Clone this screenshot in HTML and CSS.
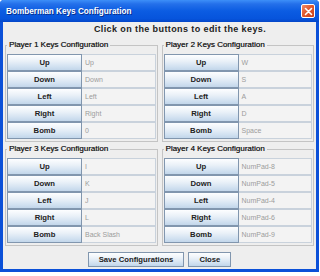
FILE: index.html
```html
<!DOCTYPE html>
<html>
<head>
	<title>Bomberman Keys Configuration</title>
	<meta charset=utf-8>
	<link rel="stylesheet" href="styles.css">
</head>
<body>
	<div class="window">
		<div class="titlebar">
			<span class="title">Bomberman Keys Configuration</span>
			<span class="close-x">
				<svg width="9" height="9" viewBox="0 0 9 9"><path d="M1.5 1.5 L7.5 7.5 M7.5 1.5 L1.5 7.5" stroke="#fff" stroke-width="1.6" stroke-linecap="round"/></svg>
			</span>
		</div>
		<div class="content">
			<p class="hint">Click on the buttons to edit the keys.</p>
			<div class="players">
				<fieldset class="player">
					<legend>Player 1 Keys Configuration</legend>
					<div class="key-row"><button class="key-btn">Up</button><span class="key-field">Up</span></div>
					<div class="key-row"><button class="key-btn">Down</button><span class="key-field">Down</span></div>
					<div class="key-row"><button class="key-btn">Left</button><span class="key-field">Left</span></div>
					<div class="key-row"><button class="key-btn">Right</button><span class="key-field">Right</span></div>
					<div class="key-row"><button class="key-btn">Bomb</button><span class="key-field">0</span></div>
				</fieldset>
				<fieldset class="player">
					<legend>Player 2 Keys Configuration</legend>
					<div class="key-row"><button class="key-btn">Up</button><span class="key-field">W</span></div>
					<div class="key-row"><button class="key-btn">Down</button><span class="key-field">S</span></div>
					<div class="key-row"><button class="key-btn">Left</button><span class="key-field">A</span></div>
					<div class="key-row"><button class="key-btn">Right</button><span class="key-field">D</span></div>
					<div class="key-row"><button class="key-btn">Bomb</button><span class="key-field">Space</span></div>
				</fieldset>
				<fieldset class="player">
					<legend>Player 3 Keys Configuration</legend>
					<div class="key-row"><button class="key-btn">Up</button><span class="key-field">I</span></div>
					<div class="key-row"><button class="key-btn">Down</button><span class="key-field">K</span></div>
					<div class="key-row"><button class="key-btn">Left</button><span class="key-field">J</span></div>
					<div class="key-row"><button class="key-btn">Right</button><span class="key-field">L</span></div>
					<div class="key-row"><button class="key-btn">Bomb</button><span class="key-field">Back Slash</span></div>
				</fieldset>
				<fieldset class="player">
					<legend>Player 4 Keys Configuration</legend>
					<div class="key-row"><button class="key-btn">Up</button><span class="key-field">NumPad-8</span></div>
					<div class="key-row"><button class="key-btn">Down</button><span class="key-field">NumPad-5</span></div>
					<div class="key-row"><button class="key-btn">Left</button><span class="key-field">NumPad-4</span></div>
					<div class="key-row"><button class="key-btn">Right</button><span class="key-field">NumPad-6</span></div>
					<div class="key-row"><button class="key-btn">Bomb</button><span class="key-field">NumPad-9</span></div>
				</fieldset>
			</div>
			<div class="actions">
				<button class="key-btn action-btn">Save Configurations</button>
				<button class="key-btn action-btn">Close</button>
			</div>
		</div>
	</div>
</body>
</html>
```

FILE: styles.css
```css
body{
	margin: 0;
	background: #fff;
	font-family: "Liberation Sans", Arial, sans-serif;
}
.window{
	width: 319px;
	height: 272px;
	box-sizing: border-box;
	border: 3px solid #0b50d8;
	border-top: 0;
	border-radius: 4px 4px 0 0;
	display: flex;
	flex-direction: column;
	background: #eeeeee;
}
.titlebar{
	height: 22px;
	margin: 0 -3px;
	padding: 0 4px 0 6px;
	border-radius: 4px 4px 0 0;
	background: linear-gradient(#3d8ff8 0%, #2470ea 18%, #0b5ce2 50%, #0654dc 85%, #0446c8 100%);
	display: flex;
	align-items: center;
	justify-content: space-between;
}
.title{
	color: #fff;
	font-weight: bold;
	font-size: 8.2px;
	text-shadow: 1px 1px 0 #0a2f8c;
}
.close-x{
	width: 14px;
	height: 14px;
	box-sizing: border-box;
	border: 1px solid #fff;
	border-radius: 2px;
	background: linear-gradient(135deg, #f08a68 0%, #e05a30 45%, #c8401a 100%);
	display: flex;
	align-items: center;
	justify-content: center;
}
.hint{
	margin: 0;
	height: 18px;
	line-height: 14px;
	padding-left: 41px;
	text-align: center;
	font-weight: bold;
	font-size: 9px;
	letter-spacing: 0.4px;
	color: #222;
}
.content{
	flex: 1;
	display: flex;
	flex-direction: column;
}
.players{
	display: grid;
	grid-template-columns: 1fr 1fr;
	column-gap: 4px;
	row-gap: 2px;
	padding: 0 2px;
}
.player{
	margin: 0;
	padding: 4px 1px 2px 1px;
	border: 1px solid #c4c4c4;
	min-width: 0;
}
.player legend{
	padding: 0 2px;
	font-size: 8px;
	line-height: 10px;
	color: #1a1a1a;
	text-shadow: 0.3px 0 0 #555;
}
.key-row{
	display: grid;
	grid-template-columns: 75px 1fr;
	height: 17px;
}
.key-btn{
	margin: 0;
	padding: 0;
	height: 17px;
	border: 1px solid #8196ae;
	background: linear-gradient(#fdfeff 0%, #eaf1f8 40%, #d3e2f1 75%, #c2d6ea 100%);
	font-family: "Liberation Sans", Arial, sans-serif;
	font-weight: bold;
	font-size: 7.7px;
	color: #222;
}
.key-field{
	height: 17px;
	box-sizing: border-box;
	border: 1px solid #c9d2dc;
	border-left: 0;
	background: #f3f3f3;
	padding-left: 3px;
	font-size: 7px;
	line-height: 15px;
	color: #9c9c9c;
	white-space: nowrap;
	overflow: hidden;
}
.actions{
	display: flex;
	justify-content: center;
	gap: 4px;
	padding-top: 6px;
}
.action-btn{
	height: 15px;
	padding: 0 10px;
}
```
